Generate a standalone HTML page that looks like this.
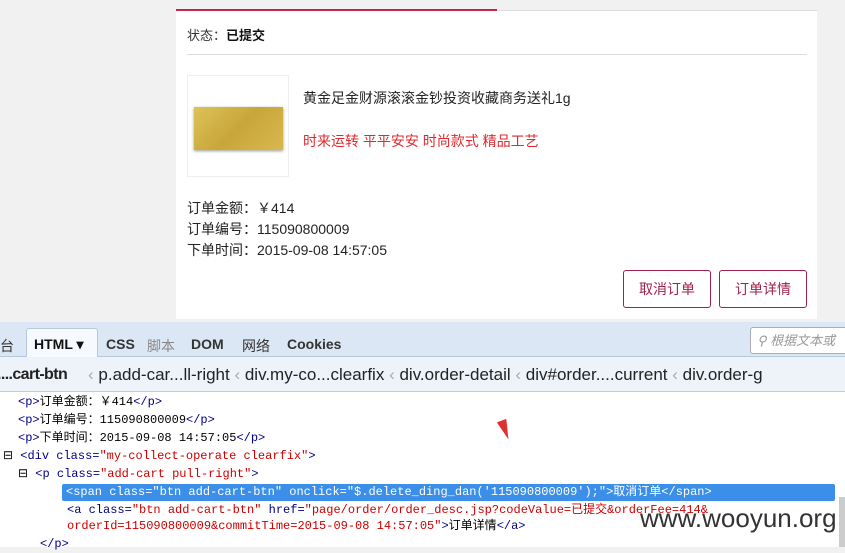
<!DOCTYPE html>
<html><head><meta charset="utf-8"><style>
*{margin:0;padding:0;box-sizing:border-box}
body{width:845px;height:547px;overflow:hidden;background:#f1f1f1;font-family:"Liberation Sans","Noto Sans CJK SC",sans-serif;position:relative}
.card{position:absolute;left:176px;top:11px;width:641px;height:308px;background:#fff}
.red{position:absolute;left:176px;top:9px;width:321px;height:2px;background:#c8254a}
.gl{position:absolute;left:497px;top:10px;width:320px;height:1px;background:#ddd}
.ab{position:absolute;white-space:nowrap}
.btn{position:absolute;top:270px;height:38px;border:1px solid #a0224a;border-radius:3px;color:#a0224a;font-size:14px;text-align:center;line-height:36px}
.tb{position:absolute;left:0;top:322px;width:845px;height:35px;background:#dbe7f4;border-bottom:1px solid #b8c8dc}
.bc{position:absolute;left:0;top:357px;width:845px;height:35px;background:#eef3fa;border-bottom:1px solid #c0ccd8;font-size:17px;color:#222;line-height:35px}
.code{position:absolute;left:0;top:392px;width:845px;height:155px;background:#fff;font-family:"Liberation Mono","Noto Sans CJK SC",monospace;font-size:12px;color:#000}
.code div{position:absolute;white-space:nowrap;height:17px;line-height:17px}
.t{color:#000088}.v{color:#c00}
</style></head><body>
<div class="card"></div>
<div class="red"></div><div class="gl"></div>
<div class="ab" style="left:187px;top:25px;font-size:13px;color:#333">状态：<b style="color:#111">已提交</b></div>
<div class="ab" style="left:187px;top:54px;width:620px;height:1px;background:#ddd"></div>
<div class="ab" style="left:187px;top:75px;width:102px;height:102px;border:1px solid #eee"></div>
<div class="ab" style="left:194px;top:107px;width:89px;height:43px;background:linear-gradient(135deg,#dcc25a,#c9a63a 50%,#d8b850);box-shadow:0 1px 3px #998"></div>
<div class="ab" style="left:303px;top:88px;font-size:14px;color:#222">黄金足金财源滚滚金钞投资收藏商务送礼1g</div>
<div class="ab" style="left:303px;top:131px;font-size:14px;color:#e0282e">时来运转 平平安安 时尚款式 精品工艺</div>
<div class="ab" style="left:187px;top:198px;font-size:14px;color:#222;line-height:21px">订单金额：￥414<br>订单编号：115090800009<br>下单时间：2015-09-08 14:57:05</div>
<div class="btn" style="left:623px;width:88px">取消订单</div>
<div class="btn" style="left:719px;width:88px">订单详情</div>
<div class="tb">
<div class="ab" style="left:26px;top:6px;width:72px;height:30px;background:#f6f9fd;border:1px solid #b8c8dc;border-bottom:none;border-radius:3px 3px 0 0"></div>
<div class="ab" style="left:0;top:14px;font-size:14px;color:#333">台</div>
<div class="ab" style="left:34px;top:14px;font-size:14px;font-weight:bold;color:#111">HTML ▾</div>
<div class="ab" style="left:106px;top:14px;font-size:14px;font-weight:bold;color:#333">CSS</div>
<div class="ab" style="left:147px;top:14px;font-size:14px;color:#888">脚本</div>
<div class="ab" style="left:191px;top:14px;font-size:14px;font-weight:bold;color:#333">DOM</div>
<div class="ab" style="left:242px;top:14px;font-size:14px;color:#333">网络</div>
<div class="ab" style="left:287px;top:14px;font-size:14px;font-weight:bold;color:#333">Cookies</div>
<div class="ab" style="left:750px;top:5px;width:100px;height:27px;background:#fff;border:1px solid #aab;border-radius:3px;font-size:13px;color:#999;font-style:italic;line-height:25px;padding-left:6px">⚲ 根据文本或</div>
</div>
<div class="bc"><span style="position:absolute;left:-3px;font-weight:bold;font-size:16px;letter-spacing:-0.6px">....cart-btn</span><span style="position:absolute;left:88px"><span style="color:#aaa">‹</span> p.add-car...ll-right <span style="color:#aaa">‹</span> div.my-co...clearfix <span style="color:#aaa">‹</span> div.order-detail <span style="color:#aaa">‹</span> div#order....current <span style="color:#aaa">‹</span> div.order-g</span></div>
<div class="code">
<div style="left:18px;top:2px"><span class="t">&lt;p&gt;</span>订单金额：￥414<span class="t">&lt;/p&gt;</span></div>
<div style="left:18px;top:20px"><span class="t">&lt;p&gt;</span>订单编号：115090800009<span class="t">&lt;/p&gt;</span></div>
<div style="left:18px;top:38px"><span class="t">&lt;p&gt;</span>下单时间：2015-09-08 14:57:05<span class="t">&lt;/p&gt;</span></div>
<div style="left:3px;top:56px">⊟ <span class="t">&lt;div class=</span><span class="v">"my-collect-operate clearfix"</span><span class="t">&gt;</span></div>
<div style="left:18px;top:74px">⊟ <span class="t">&lt;p class=</span><span class="v">"add-cart pull-right"</span><span class="t">&gt;</span></div>
<div style="left:62px;top:92px;width:773px;background:#3b8fe8;color:#fff;border-radius:2px;padding-left:4px">&lt;span class="btn add-cart-btn" onclick="$.delete_ding_dan('115090800009');"&gt;取消订单&lt;/span&gt;</div>
<div style="left:67px;top:110px"><span class="t">&lt;a class=</span><span class="v">"btn add-cart-btn"</span> <span class="t">href=</span><span class="v">"page/order/order_desc.jsp?codeValue=已提交&amp;orderFee=414&amp;</span></div>
<div style="left:67px;top:126px"><span class="v">orderId=115090800009&amp;commitTime=2015-09-08 14:57:05"</span><span class="t">&gt;</span>订单详情<span class="t">&lt;/a&gt;</span></div>
<div style="left:40px;top:144px"><span class="t">&lt;/p&gt;</span></div>
<div style="left:500px;top:28px;width:0;height:0;border-left:5px solid transparent;border-right:5px solid transparent;border-top:20px solid #e03030;transform:rotate(-20deg)"></div>
<div style="left:640px;top:111px;font-family:'Liberation Sans',sans-serif;font-size:26px;color:#333;line-height:30px;height:30px">www.wooyun.org</div>
<div style="left:839px;top:105px;width:6px;height:50px;background:#ccc"></div>
</div>
</body></html>
